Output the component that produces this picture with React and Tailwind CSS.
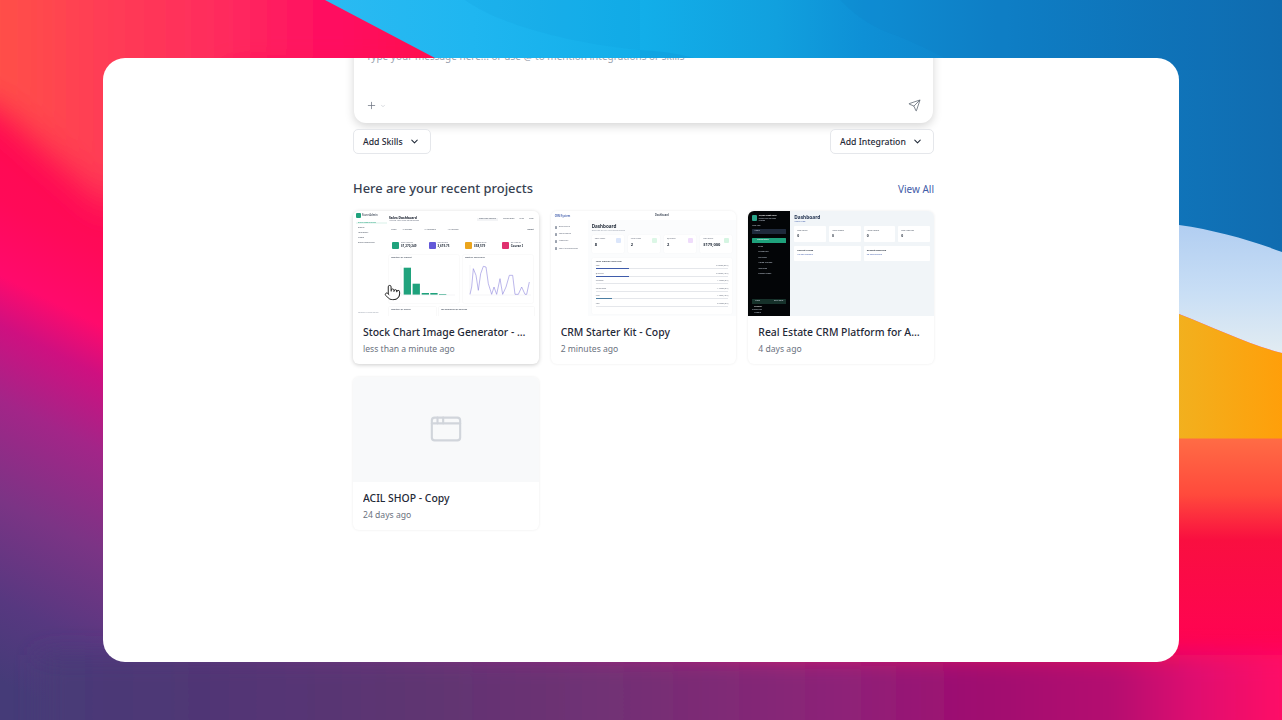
import React from "react";
import { Plus, ChevronDown, Send, AppWindow, Pointer } from "lucide-react";

function Wallpaper() {
  return (
    <svg className="absolute inset-0 w-full h-full" viewBox="0 0 1282 720" preserveAspectRatio="none">
      <defs>
        <linearGradient id="base" gradientUnits="userSpaceOnUse" x1="0" y1="100" x2="-250" y2="600">
          <stop offset="0" stopColor="#ff0a4e" />
          <stop offset="0.16" stopColor="#ff0a58" />
          <stop offset="0.28" stopColor="#ff0a6c" />
          <stop offset="0.36" stopColor="#cf1080" />
          <stop offset="0.48" stopColor="#a32588" />
          <stop offset="0.64" stopColor="#7b3485" />
          <stop offset="0.8" stopColor="#573880" />
          <stop offset="0.93" stopColor="#453b78" />
        </linearGradient>
        <linearGradient id="coral" gradientUnits="userSpaceOnUse" x1="0" y1="40" x2="420" y2="40">
          <stop offset="0" stopColor="#ff5048" />
          <stop offset="0.25" stopColor="#ff3c55" />
          <stop offset="0.55" stopColor="#ff2a5e" />
          <stop offset="0.8" stopColor="#ff0a62" />
          <stop offset="1" stopColor="#ff0a50" />
        </linearGradient>
        <linearGradient id="blue" gradientUnits="userSpaceOnUse" x1="330" y1="0" x2="1282" y2="0">
          <stop offset="0" stopColor="#2abaf2" />
          <stop offset="0.15" stopColor="#1fb6f0" />
          <stop offset="0.33" stopColor="#12aee9" />
          <stop offset="0.47" stopColor="#11a0de" />
          <stop offset="0.56" stopColor="#0e90d6" />
          <stop offset="0.72" stopColor="#0f7fc6" />
          <stop offset="1" stopColor="#106cb0" />
        </linearGradient>
        <linearGradient id="sky" x1="0" y1="0" x2="0" y2="1">
          <stop offset="0" stopColor="#a9c8f0" />
          <stop offset="0.6" stopColor="#c8def5" />
          <stop offset="1" stopColor="#e2ecf2" />
        </linearGradient>
        <linearGradient id="orange" gradientUnits="userSpaceOnUse" x1="1179" y1="0" x2="1282" y2="0">
          <stop offset="0" stopColor="#f2b01e" />
          <stop offset="1" stopColor="#ff9f0a" />
        </linearGradient>
        <linearGradient id="redr" gradientUnits="userSpaceOnUse" x1="0" y1="438" x2="0" y2="720">
          <stop offset="0" stopColor="#ff6c45" />
          <stop offset="0.2" stopColor="#ff4a3c" />
          <stop offset="0.36" stopColor="#f90f40" />
          <stop offset="0.72" stopColor="#ff0352" />
          <stop offset="1" stopColor="#ff0a78" />
        </linearGradient>
        <linearGradient id="bottom" gradientUnits="userSpaceOnUse" x1="0" y1="0" x2="1282" y2="0">
          <stop offset="0" stopColor="#463c78" />
          <stop offset="0.16" stopColor="#503675" />
          <stop offset="0.32" stopColor="#5e3572" />
          <stop offset="0.48" stopColor="#723074" />
          <stop offset="0.66" stopColor="#8e2278" />
          <stop offset="0.78" stopColor="#a2086f" />
          <stop offset="0.87" stopColor="#b50a70" />
          <stop offset="0.93" stopColor="#de0a70" />
          <stop offset="1" stopColor="#ff0a66" />
        </linearGradient>
        <filter id="soft" x="-20%" y="-20%" width="140%" height="140%">
          <feGaussianBlur stdDeviation="16" />
        </filter>
        <filter id="soft2" x="-10%" y="-60%" width="120%" height="220%">
          <feGaussianBlur stdDeviation="12" />
        </filter>
      </defs>
      <rect width="1282" height="720" fill="url(#base)" />
      <path d="M-60 -60H500V70H230L110 210L0 110L-60 80Z" fill="url(#coral)" filter="url(#soft)" />
      <rect x="1179" y="438" width="103" height="282" fill="url(#redr)" />
      <rect x="40" y="655" width="1300" height="120" fill="url(#bottom)" filter="url(#soft2)" />
      <path d="M1000 300L1179 314C1215 328 1250 345 1282 353V438.5H1000Z" fill="url(#orange)" />
      <path d="M1000 200H1282V353C1250 345 1215 328 1179 314L1000 300Z" fill="url(#sky)" />
      <path d="M325 0L435 58L700 120L1000 210L1179 225C1215 230 1250 240 1282 252V0Z" fill="url(#blue)" />
      <path d="M840 0C860 20 875 28 895 35C925 47 950 60 965 70L1282 70V0Z" fill="#0a62a8" opacity="0.07" />
      <path d="M640 50C680 52 705 60 725 70H640Z" fill="#0a80c8" opacity="0.18" />
      <path d="M465 0C495 22 560 42 640 50L640 0Z" fill="#0a88d0" opacity="0.1" />
    </svg>
  );
}

const T = ({ c = "", children }) => <div className={`whitespace-nowrap leading-none ${c}`}>{children}</div>;

function Thumb1() {
  const nav = ["Sales Dashboard", "Safety", "Inventory", "Users", "Sales Reminder"];
  const stats = [
    ["bg-[#1fa27c]", "Total Revenue", "$1,270,249"],
    ["bg-[#6359d8]", "Total Orders", "3,619.75"],
    ["bg-[#eba51d]", "Average Order", "$58,579"],
    ["bg-[#e0306e]", "Top Product", "Course I"],
  ];
  const line = [[360,262],[365,240],[370,185],[378,205],[385,250],[392,200],[400,178],[408,180],[415,230],[425,262],[432,240],[440,262],[450,215],[458,262],[468,240],[478,205],[488,205],[495,262],[505,262],[515,240],[525,262],[530,262],[538,225]]
    .map(([x, y]) => `${x / 3 - 113},${y / 3 - 48}`).join(" ");
  return (
    <div className="h-full flex bg-white text-[#4b5563] blur-[0.45px]">
      <div className="w-[34px] flex flex-col pl-[3px] pt-[2px] pb-[2px] shrink-0">
        <div className="flex items-center gap-[1px] mb-[4px]">
          <div className="w-[5px] h-[5px] rounded-[1px] bg-[#1fa27c]" />
          <T c="text-[2.6px] font-semibold">Store Admin</T>
        </div>
        <div className="flex flex-col gap-[2.8px]">
          {nav.map((n, i) => (
            <T key={n} c={`text-[2.3px] ${i === 0 ? "text-[#1fa27c] bg-[#ecf8f4]" : ""} pl-[2px]`}>{n}</T>
          ))}
        </div>
        <T c="text-[1.8px] mt-auto pl-[2px] text-[#9ca3af]">Powered by store admin</T>
      </div>
      <div className="flex-1 min-w-0 flex flex-col pl-[2px] pr-[5px] pt-[4px] overflow-hidden">
        <div className="flex items-center justify-between h-[8px] shrink-0">
          <div>
            <T c="text-[3.4px] font-bold text-[#111827]">Sales Dashboard</T>
            <T c="text-[2px] text-[#6b7280] mt-[0.5px]">Analyze your sales performance</T>
          </div>
          <div className="flex gap-[5px] text-[2px]">
            <T c="bg-[#f3f4f6] px-[2px] py-[0.5px]">Date Last 30 Days</T>
            <T>Import Data</T><T>Print</T><T>Filter</T>
          </div>
        </div>
        <div className="flex items-center gap-[6px] text-[1.9px] mt-[4px] h-[6px] shrink-0 pl-[2px]">
          <T>Filters</T><T>All Regions</T>
          <T c="ml-[6px]">All Managers</T><T c="ml-[6px]">All Products</T>
          <T c="ml-auto font-bold">Export</T>
        </div>
        <div className="flex gap-[3.5px] mt-[6px] pl-[2px] shrink-0">
          {stats.map(([bg, a, b]) => (
            <div key={a} className="flex-1 h-[12px] flex items-center gap-[2px] pl-[1px]">
              <div className={`w-[7px] h-[7px] rounded-[1px] ${bg}`} />
              <div>
                <T c="text-[1.8px] text-[#6b7280]">{a}</T>
                <T c="text-[3px] font-bold text-[#1f2937] mt-[0.5px]">{b}</T>
              </div>
            </div>
          ))}
        </div>
        <div className="flex gap-[4px] mt-[4px] shrink-0">
          <div className="w-[70px] h-[48px] rounded-[1px] shadow-[0_0_1.5px_rgba(0,0,0,0.1)] px-[2px] pt-[2px]">
            <T c="text-[2px] font-semibold">Inventory by Product</T>
            <svg width="70" height="44" viewBox="0 4 70 44" className="block -ml-[2px]">
              <g fill="#1fa27c">
                <rect x="14.7" y="12.7" width="7.3" height="27" />
                <rect x="23.6" y="28.7" width="7.3" height="11" />
                <rect x="32.7" y="38" width="7.3" height="1.7" />
                <rect x="41.3" y="38" width="7.3" height="1.7" />
                <rect x="50" y="39" width="7.3" height="0.7" />
              </g>
              <path d="M12 10V40H66" stroke="#e5e7eb" strokeWidth="0.4" fill="none" />
            </svg>
          </div>
          <div className="w-[70px] h-[48px] rounded-[1px] shadow-[0_0_1.5px_rgba(0,0,0,0.1)] px-[2px] pt-[2px]">
            <T c="text-[2px] font-semibold">Monthly Sales Trend</T>
            <svg width="70" height="44" viewBox="0 4 70 44" className="block -ml-[2px]">
              <path d="M7 10V40H68" stroke="#e5e7eb" strokeWidth="0.4" fill="none" />
              <polyline points={line} fill="none" stroke="#8f86dd" strokeWidth="0.6" />
            </svg>
          </div>
        </div>
        <div className="flex gap-[3px] mt-[4px] shrink-0">
          <div className="w-[47px] h-[10px] shadow-[0_0_1.5px_rgba(0,0,0,0.1)] pt-[2px] pl-[2px]">
            <T c="text-[2px] font-semibold">Inventory by Region</T>
          </div>
          <div className="flex-1 h-[10px] shadow-[0_0_1.5px_rgba(0,0,0,0.1)] pt-[2px] pl-[2px]">
            <T c="text-[2px] font-semibold">Top Employees by Revenue</T>
          </div>
        </div>
      </div>
    </div>
  );
}

function Thumb2() {
  const nav = ["Dashboard", "Leads/Deals", "Meetings", "Lead Management"];
  const stats = [
    ["Total Leads", "8", "bg-[#dbe6fb]"],
    ["New Leads", "2", "bg-[#dcf7e6]"],
    ["Qualified", "2", "bg-[#efdcfb]"],
    ["Won Deals", "$179,000", "bg-[#d5f5e2]"],
  ];
  const rows = [
    ["New", "3 Leads (37%)", "w-1/4", "bg-[#3f5cab]"],
    ["Qualified", "3 Leads (12%)", "w-1/4", "bg-[#3f5cab]"],
    ["Proposal", "1 Leads (0%)", "w-0", ""],
    ["Negotiation", "1 Leads (0%)", "w-0", ""],
    ["Won", "1 Lead (12%)", "w-[12.5%]", "bg-[#4c7ea3]"],
    ["Lost", "0 Leads (0%)", "w-0", ""],
  ];
  return (
    <div className="h-full flex bg-white text-[#6b7280] blur-[0.45px]">
      <div className="w-[37px] shrink-0 pl-[4px] pt-[3.5px]">
        <T c="text-[2.6px] font-semibold text-[#3f5cab]">CRM System</T>
        <div className="flex flex-col gap-[4.6px] mt-[9px]">
          {nav.map((n) => (
            <div key={n} className="flex items-center gap-[1.5px]">
              <div className="w-[2.5px] h-[2.5px] bg-[#9ca3af] rounded-[0.5px]" />
              <T c="text-[2.2px]">{n}</T>
            </div>
          ))}
        </div>
      </div>
      <div className="flex-1 min-w-0 flex flex-col bg-[#fbfcfd]">
        <div className="h-[9px] shrink-0 bg-white flex items-center justify-center relative">
          <T c="text-[2.6px] font-semibold text-[#374151]">Dashboard</T>
        </div>
        <div className="pl-[4px] pr-[4px] pt-[4px]">
          <T c="text-[4.6px] font-bold text-[#1f2937]">Dashboard</T>
          <T c="text-[2px] text-[#9ca3af] mt-[1px]">Overview of your CRM performance</T>
          <div className="flex gap-[4px] mt-[3.5px]">
            {stats.map(([a, b, bg]) => (
              <div key={a} className="flex-1 h-[18px] bg-white rounded-[1px] shadow-[0_0_1px_rgba(0,0,0,0.08)] flex justify-between px-[3px] pt-[3px]">
                <div>
                  <T c="text-[2px]">{a}</T>
                  <T c="text-[4px] font-bold text-[#1f2937] mt-[3px]">{b}</T>
                </div>
                <div className={`w-[5px] h-[5px] rounded-[1px] ${bg}`} />
              </div>
            ))}
          </div>
          <div className="bg-white h-[56px] mt-[4.5px] rounded-[1px] shadow-[0_0_1px_rgba(0,0,0,0.08)] px-[4px] pt-[3px]">
            <T c="text-[2.3px] font-semibold text-[#374151] mb-[2.5px]">Lead Pipeline Overview</T>
            <div className="flex flex-col gap-[3.4px]">
              {rows.map(([a, b, w, col]) => (
                <div key={a}>
                  <div className="flex justify-between text-[1.9px]"><T>{a}</T><T>{b}</T></div>
                  <div className="h-[1px] bg-[#e5e7eb] mt-[1.2px]"><div className={`h-full ${w} ${col}`} /></div>
                </div>
              ))}
            </div>
          </div>
        </div>
      </div>
    </div>
  );
}

function Thumb3() {
  const nav = ["Sites", "Properties", "Portfolio", "Home Listings", "Inquiries", "Closed Leads"];
  const stats = ["Total Leads", "Active Clients", "Active Listings", "Total Inquiries"];
  return (
    <div className="h-full flex bg-[#f1f5f8] blur-[0.45px]">
      <div className="w-[42px] shrink-0 bg-[#030507] text-[#cbd5e1] flex flex-col px-[2px] pt-[4px] pb-[2px]">
        <div className="flex items-center gap-[1.5px] pl-[2px]">
          <div className="w-[5px] h-[6px] rounded-[1px] bg-[#2aa58a]" />
          <div>
            <T c="text-[2.2px] font-semibold text-white">Urban Nest CRM</T>
            <T c="text-[1.5px] mt-[0.5px]">Manage your real estate</T>
            <T c="text-[1.5px] mt-[0.5px]">business</T>
          </div>
        </div>
        <T c="text-[1.8px] mt-[4px] pl-[2px]">Role View</T>
        <div className="h-[5px] bg-[#1e293b] mt-[1.5px] mx-[2px] rounded-[0.5px] text-[1.8px] flex items-center pl-[2px]">Admin</div>
        <div className="h-[5.5px] bg-[#1fa27c] mt-[4px] mx-[2px] rounded-[0.5px] flex items-center pl-[5px]"><T c="text-[2.2px] text-white">Dashboard</T></div>
        <div className="flex flex-col gap-[3.4px] mt-[3px] pl-[8px]">
          {nav.map((n) => <T key={n} c="text-[2.1px]">{n}</T>)}
        </div>
        <div className="h-[5px] bg-[#16312a] mt-auto mx-[2px] rounded-[0.5px] flex items-center justify-between px-[3px] text-[1.8px]"><T>Close</T><T>Dark mode</T></div>
        <T c="text-[2.1px] mt-[2px] pl-[4px] text-white">Support</T>
        <T c="text-[1.7px] mt-[1.5px] pl-[2px]">Signed in as</T>
        <T c="text-[2.1px] mt-[1px] pl-[4px]">Logout</T>
      </div>
      <div className="flex-1 min-w-0 pl-[4px] pr-[4px] pt-[4px]">
        <T c="text-[4.8px] font-bold text-[#1e2f4d]">Dashboard</T>
        <T c="text-[2px] text-[#3f5cab] mt-[1px]">Admin View</T>
        <div className="flex gap-[3px] mt-[3px]">
          {stats.map((a) => (
            <div key={a} className="flex-1 h-[16px] bg-white rounded-[1px] px-[3px] pt-[4px]">
              <T c="text-[1.9px] text-[#4b5563]">{a}</T>
              <T c="text-[3.4px] font-bold text-[#1f2937] mt-[2px]">0</T>
            </div>
          ))}
        </div>
        <div className="flex gap-[3px] mt-[4px]">
          <div className="flex-1 h-[15px] bg-white rounded-[1px] px-[3px] pt-[3px]">
            <T c="text-[2.4px] font-bold text-[#1f2937]">Recent Leads</T>
            <T c="text-[1.9px] text-[#3f5cab] mt-[3px]">No data available</T>
          </div>
          <div className="flex-1 h-[15px] bg-white rounded-[1px] px-[3px] pt-[3px]">
            <T c="text-[2.4px] font-bold text-[#1f2937]">Recent Inquiries</T>
            <T c="text-[1.9px] text-[#3f5cab] mt-[3px]">No data available</T>
          </div>
        </div>
      </div>
    </div>
  );
}

function Card({ title, time, strong, children }) {
  return (
    <div className={`h-[153px] rounded-[6px] bg-white overflow-hidden flex flex-col ${strong ? "shadow-[0_1px_4px_rgba(0,0,0,0.2)]" : "shadow-[0_0_3px_rgba(0,0,0,0.08)]"}`}>
      <div className="h-[105px] shrink-0 overflow-hidden">{children}</div>
      <div className="px-[10px] pt-[8px]">
        <div className="text-[10.4px] leading-[16px] font-medium text-[#1f2937] truncate">{title}</div>
        <div className="text-[8.6px] leading-[14px] text-[#6b7280] mt-[2px]">{time}</div>
      </div>
    </div>
  );
}

export default function App() {
  return (
    <div className="relative w-screen h-screen overflow-hidden flex items-center justify-center" style={{ fontFamily: '"Noto Sans", sans-serif' }}>
      <Wallpaper />
      <div className="relative w-[1076px] h-[604px] rounded-[22px] bg-white overflow-hidden">
        <div className="w-[581px] ml-[250px] -mt-[20px]">
          <div className="mx-[1px] h-[85px] rounded-[12px] bg-white shadow-[0_3px_10px_rgba(0,0,0,0.17)] flex flex-col px-[12px] pt-[11px] pb-[11px]">
            <div className="text-[10px] leading-[14px] text-[#9ca3af]">Type your message here... or use @ to mention integrations or skills</div>
            <div className="mt-auto flex items-center justify-between text-[#6b7280]">
              <div className="flex items-center gap-[3px]">
                <Plus size={11} strokeWidth={1.6} />
                <ChevronDown size={6} strokeWidth={1.5} className="text-[#9ca3af]" />
              </div>
              <Send size={13} strokeWidth={1.3} className="text-[#4b5563]" />
            </div>
          </div>
          <div className="flex justify-between mt-[6px]">
            <button className="h-[25px] w-[78px] rounded-[5px] bg-white border border-[#e5e7eb] flex items-center justify-between pl-[9px] pr-[10px] text-[8.7px] font-medium text-[#1f2937]">
              <span className="pt-[2px]">Add Skills</span> <ChevronDown size={11} strokeWidth={2.2} />
            </button>
            <button className="h-[25px] w-[104px] rounded-[5px] bg-white border border-[#e5e7eb] flex items-center justify-between pl-[9px] pr-[10px] text-[8.7px] font-medium text-[#1f2937]">
              <span className="pt-[2px]">Add Integration</span> <ChevronDown size={11} strokeWidth={2.2} />
            </button>
          </div>
          <div className="flex items-center justify-between mt-[25px] h-[20px]">
            <div className="text-[12.9px] font-medium text-[#374151]">Here are your recent projects</div>
            <div className="text-[10px] text-[#3f5ca8]">View All</div>
          </div>
          <div className="grid grid-cols-3 gap-x-[12px] gap-y-[12.5px] mt-[12px]">
            <div className="relative">
              <Card title="Stock Chart Image Generator - Copy" time="less than a minute ago" strong><Thumb1 /></Card>
              <Pointer size={17} strokeWidth={1.4} fill="#fff" className="absolute left-[31px] top-[73px] text-[#222]" />
            </div>
            <Card title="CRM Starter Kit - Copy" time="2 minutes ago"><Thumb2 /></Card>
            <Card title="Real Estate CRM Platform for Admin" time="4 days ago"><Thumb3 /></Card>
            <Card title="ACIL SHOP - Copy" time="24 days ago">
              <div className="h-full bg-[#f8f9fa] flex items-center justify-center">
                <AppWindow size={34} strokeWidth={1.5} className="text-[#d1d5db]" />
              </div>
            </Card>
          </div>
        </div>
      </div>
    </div>
  );
}
